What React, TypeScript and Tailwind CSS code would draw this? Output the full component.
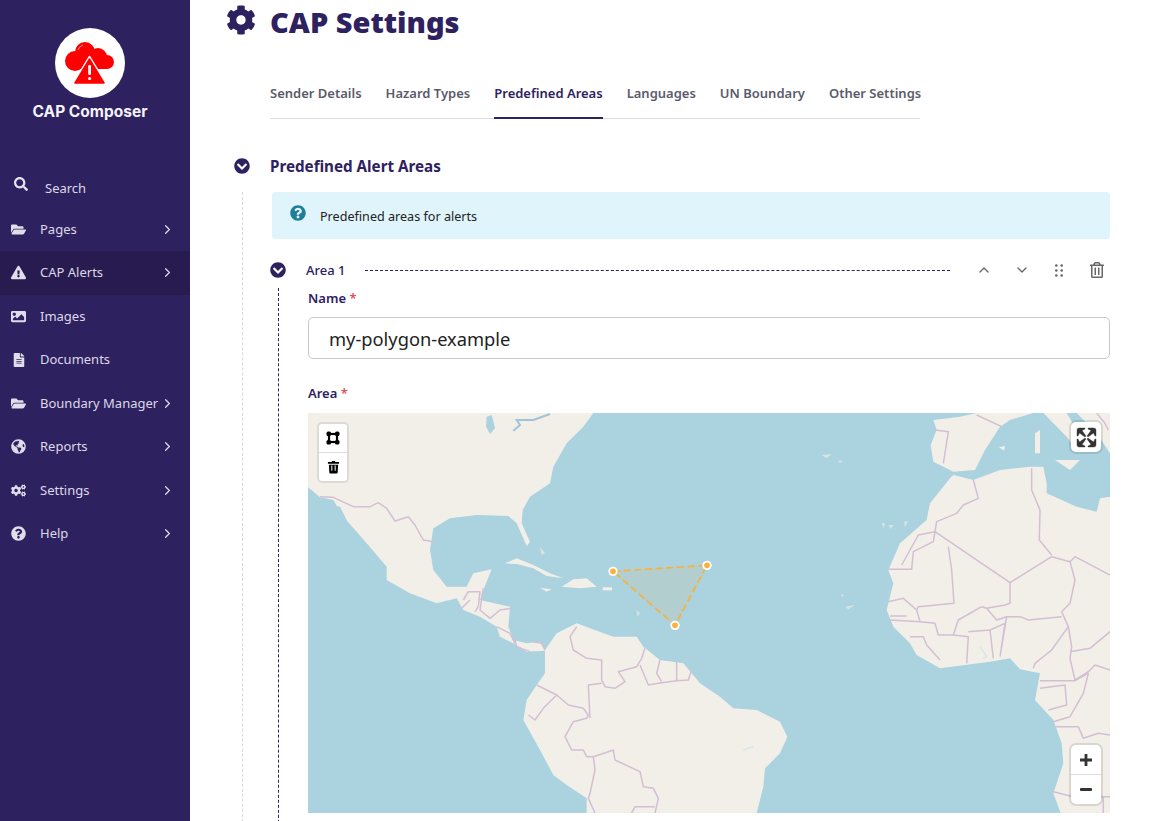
import type { ReactNode } from "react"
import {
  FaChevronCircleDown,
  FaCog,
  FaCogs,
  FaExclamationTriangle,
  FaFileAlt,
  FaFolderOpen,
  FaGlobeAmericas,
  FaImage,
  FaQuestionCircle,
  FaRegTrashAlt,
  FaSearch,
} from "react-icons/fa"
import { LuChevronDown, LuChevronRight, LuChevronUp } from "react-icons/lu"

const navItems: { label: string; icon: ReactNode; arrow: boolean; active?: boolean }[] = [
  { label: "Pages", icon: <FaFolderOpen />, arrow: true },
  { label: "CAP Alerts", icon: <FaExclamationTriangle />, arrow: true, active: true },
  { label: "Images", icon: <FaImage />, arrow: false },
  { label: "Documents", icon: <FaFileAlt className="text-[14px] ml-px" />, arrow: false },
  { label: "Boundary Manager", icon: <FaFolderOpen />, arrow: true },
  { label: "Reports", icon: <FaGlobeAmericas />, arrow: true },
  { label: "Settings", icon: <FaCogs />, arrow: true },
  { label: "Help", icon: <FaQuestionCircle />, arrow: true },
]

const tabs = ["Sender Details", "Hazard Types", "Predefined Areas", "Languages", "UN Boundary", "Other Settings"]

function Logo() {
  return (
    <svg viewBox="0 0 70 70" className="w-[70px] h-[70px]">
      <circle cx="35" cy="35" r="35" fill="#fff" />
      <g fill="#f00">
        <circle cx="20" cy="33" r="10" />
        <circle cx="30" cy="24" r="10" />
        <circle cx="43" cy="29" r="9" />
        <circle cx="52" cy="34" r="7" />
        <rect x="20" y="30" width="32" height="11" />
      </g>
      <path d="M23 22 a8 8 0 0 1 5 -5" fill="none" stroke="#fff" strokeOpacity="0.7" strokeWidth="0.8" />
      <path d="M34.5 29 L51 56 L18 56 Z" fill="#f00" stroke="#fff" strokeWidth="2.2" strokeLinejoin="round" />
      <path d="M34.5 31 L49 55 L20 55 Z" fill="#f00" stroke="#f00" strokeWidth="1.5" strokeLinejoin="round" />
      <rect x="33.2" y="37" width="2.8" height="10" rx="1.2" fill="#fff" />
      <circle cx="34.6" cy="50.5" r="1.6" fill="#fff" />
    </svg>
  )
}

function Sidebar() {
  return (
    <aside className="w-[190px] shrink-0 h-full bg-[#2e2160] text-[#dcd9e8] font-['Noto_Sans',sans-serif]">
      <div className="flex flex-col items-center pt-[28px] pr-[10px]">
        <Logo />
        <div className="mt-[4px] font-['Inter',sans-serif] font-bold text-[15.5px] leading-[20px] text-[#f4f3f8] whitespace-nowrap">
          CAP Composer
        </div>
      </div>
      <div className="mt-[45px] h-[40.5px] flex items-center pl-[14px] text-[13px]">
        <FaSearch className="text-[14px] -mt-[7px] text-[#e6e4ef]" />
        <span className="ml-[17px] mt-[2px]">Search</span>
      </div>
      <nav className="flex flex-col">
        {navItems.map((item) => (
          <div
            key={item.label}
            className={`h-[43.5px] flex items-center pl-[10px] text-[13px] ${item.active ? "bg-[#271b4f]" : ""}`}
          >
            <span className="w-[16px] flex justify-center text-[15px] text-[#e0deeb]">{item.icon}</span>
            <span className="ml-[14px] flex-1 whitespace-nowrap">{item.label}</span>
            {item.arrow && <LuChevronRight className="text-[15px] mr-[15px] shrink-0" />}
          </div>
        ))}
      </nav>
    </aside>
  )
}

function Grip() {
  return (
    <svg viewBox="0 0 8 13" className="w-[8px] h-[13px]" fill="#666">
      <circle cx="1.3" cy="1.5" r="1.3" />
      <circle cx="6.7" cy="1.5" r="1.3" />
      <circle cx="1.3" cy="6.5" r="1.3" />
      <circle cx="6.7" cy="6.5" r="1.3" />
      <circle cx="1.3" cy="11.5" r="1.3" />
      <circle cx="6.7" cy="11.5" r="1.3" />
    </svg>
  )
}

function MapBase() {
  return (
    <svg
      viewBox="24 9 2406 1200"
      className="w-full h-full block blur-[0.5px]"
      preserveAspectRatio="none"
    >
      <rect x="24" y="9" width="2406" height="1200" fill="#abd2df" />
      {/* americas */}
      <path
        fill="#f2efe9"
        d="M24 9 L880 9 L850 50 L800 100 L760 170 L750 220 L690 260 L668 300 L665 340 L690 395 L680 408 L650 340 L625 318 L530 315 L450 325 L400 355 L390 420 L400 480 L440 530 L500 530 L520 490 L575 478 L550 540 L540 570 L630 590 L625 650 L640 690 L680 700 L720 695 L735 720 L770 670 L830 640 L870 655 L940 680 L1010 680 L1030 710 L1080 750 L1150 760 L1200 820 L1260 860 L1300 895 L1370 900 L1440 935 L1462 980 L1440 1030 L1395 1075 L1390 1130 L1370 1209 L860 1209 L860 1165 L800 1125 L760 1095 L720 1020 L670 930 L680 870 L710 825 L735 790 L735 722 L680 725 L640 700 L600 680 L590 650 L540 620 L490 600 L470 565 L410 580 L330 550 L260 510 L260 470 L200 400 L130 320 L100 270 L60 262 L24 232 Z"
      />
      <path fill="#abd2df" d="M100 285 L120 290 L150 350 L190 440 L180 448 L150 400 L110 345 Z" />
      <path fill="#abd2df" d="M560 20 L575 15 L585 55 L570 72 L558 50 Z" />
      <path fill="none" stroke="#9fc4d6" strokeWidth="6" d="M640 62 L660 45 L650 30 L700 30 L750 12" />
      <path fill="#f2efe9" d="M615 460 L650 445 L700 465 L750 490 L790 505 L740 498 L700 475 L650 462 Z" />
      <path fill="#f2efe9" d="M720 533 L755 538 L740 545 Z" />
      <path fill="#f2efe9" d="M785 530 L820 508 L860 505 L890 530 L840 535 Z" />
      <path fill="#f2efe9" d="M908 532 L936 532 L936 541 L908 541 Z" />
      <path fill="#d8e4e2" d="M720 410 L735 430 L725 435 Z M1010 600 L1020 610 L1012 620 Z" />
      <g fill="none" stroke="#d3bfd3" strokeWidth="4.5" strokeLinejoin="round">
        <path d="M60 260 L100 262 L160 290 L210 290 L235 278 L260 295 L285 333 L325 320 L345 345 L370 390 L400 395" />
        <path d="M490 570 L505 545 L540 545 L535 590 L525 605 M485 595 L510 570 M550 535 L540 600 L570 625 L600 600 L635 595 M590 650 L630 670 L645 700 M645 690 L650 710 L690 725 M700 695 L725 700 L735 720" />
        <path d="M830 650 L810 680 L820 720 L860 745 L905 750 L905 810 L915 830 L945 835 L975 815 L955 785 L1010 770 L1025 745 L1035 715" />
        <path d="M1020 765 L1045 825 L1075 820 L1130 812 L1165 810 L1175 780 M1080 750 L1070 790 L1085 815 M1130 755 L1130 810" />
        <path d="M905 820 L865 825 L870 925 M710 825 L770 855 L730 895 L705 930 L685 915" />
        <path d="M770 855 L805 885 L850 895 L865 915 L860 925 L820 935 L795 980 L815 1020 L850 1020 L860 1040 L880 1040 L940 1020 L945 1050 L1020 1085 L1030 1130 L1060 1135 L1075 1165 L1065 1209" />
        <path d="M880 1040 L885 1080 L870 1150 L865 1165 L885 1209 M995 1209 L1005 1190 L1065 1190" />
      </g>
      <g transform="translate(1200 0)">
        {/* africa and europe */}
        <path
          fill="#f2efe9"
          d="M760 195 L820 210 L900 180 L990 170 L1030 170 L1040 220 L1040 250 L1130 290 L1190 305 L1200 265 L1230 260 L1230 1209 L1082 1209 L1060 1150 L1090 1060 L1085 1000 L1060 930 L1005 870 L1020 790 L960 778 L930 745 L870 755 L720 775 L650 735 L630 700 L580 650 L560 600 L580 520 L565 480 L600 400 L680 330 L690 280 L750 205 Z"
        />
        <path
          fill="#f2efe9"
          d="M700 30 L780 20 L830 9 L1000 9 L930 30 L900 50 L855 120 L825 180 L760 185 L700 155 L692 105 L710 60 Z"
        />
        <path fill="#f2efe9" d="M1030 9 L1060 40 L1100 80 L1140 130 L1130 90 L1170 110 L1130 60 L1100 9 Z" />
        <path fill="#f2efe9" d="M1130 9 L1190 70 L1230 130 L1230 9 Z" />
        <path fill="#f2efe9" d="M1005 70 L1020 60 L1020 130 L1005 130 Z" />
        <path fill="#f2efe9" d="M1065 150 L1140 150 L1110 180 Z" />
        <path fill="#f2efe9" d="M897 112 L915 108 L912 122 Z" />
        <path
          fill="#d8e4e2"
          d="M365 135 L395 132 L380 145 Z M412 152 L430 152 L420 158 Z M545 340 L555 338 L552 355 Z M565 345 L580 345 L572 357 Z M612 335 L625 332 L615 352 Z M422 552 L432 555 L428 562 Z M435 590 L465 585 L445 598 Z"
        />
        <path fill="none" stroke="#d5e6ea" strokeWidth="4" d="M130 1020 L160 1010 M840 710 L860 740 L850 745" />
        <g fill="none" stroke="#d3bfd3" strokeWidth="4.5" strokeLinejoin="round">
          <path d="M705 60 L745 65 L730 160 M830 15 L905 50 M1190 9 L1215 40 L1225 60" />
          <path d="M995 175 L995 240 L1020 300 L1018 390 L1055 435" />
          <path d="M820 210 L835 265 L790 285 L770 310 L710 335 L705 365 L930 518" />
          <path d="M565 478 L635 478 L640 425 L700 395 L705 365 L655 375 L605 465" />
          <path d="M745 410 L755 480 L762 580 L655 590 L650 600" />
          <path d="M930 518 L930 580 L915 585 L860 595 L845 590" />
          <path d="M930 518 L1055 440 L1110 455 L1125 440 L1230 495" />
          <path d="M1110 455 L1125 510 L1110 580 L1085 605 L1105 650 L1115 710 L1110 745 L1125 810" />
          <path d="M860 595 L890 630 L920 620 L960 620 L985 630 L1085 620" />
          <path d="M565 575 L610 565 L650 600 L660 635 L570 630 M570 618 L620 618 M660 635 L705 640 L715 675 L760 675 L775 630 L845 590" />
          <path d="M760 675 L805 680 L800 760 M805 665 L870 660 L880 745 M870 660 L915 640 L900 740 M920 620 L900 740" />
          <path d="M1105 650 L1055 720 L1005 760 L1000 775 M630 680 L670 680 L680 705 L720 750" />
          <path d="M1110 725 L1170 715 L1230 665 M1125 810 L1165 785 L1185 765 L1230 780" />
          <path d="M1020 812 L1125 812 L1165 790 L1150 850 L1110 920 L1060 935 M1020 835 L1095 825 L1100 885 L1045 900" />
          <path d="M1065 950 L1135 950 L1150 985 L1195 970 L1230 975 M1060 1145 L1120 1160 L1230 1160 M1210 1160 L1210 1209" />
        </g>
      </g>
      {/* drawn polygon */}
      <path
        d="M939 484 L1221 466 L1125 646 Z"
        fill="#fbb03b"
        fillOpacity="0.1"
        stroke="#fbb03b"
        strokeWidth="5"
        strokeDasharray="22 10"
      />
      {[
        [939, 484],
        [1221, 466],
        [1125, 646],
      ].map(([cx, cy]) => (
        <g key={cx}>
          <circle cx={cx} cy={cy} r="14" fill="#fff" />
          <circle cx={cx} cy={cy} r="8.5" fill="#fbb03b" />
        </g>
      ))}
    </svg>
  )
}

function MapControls() {
  return (
    <>
      <div className="absolute left-[9px] top-[9px] w-[32px] rounded-[5px] bg-white border-2 border-[#dcdad5] overflow-hidden">
        <div className="h-[29px] flex items-center justify-center border-b border-[#ddd]">
          <svg viewBox="0 0 14 14" className="w-[14px] h-[14px]">
            <rect x="3" y="3" width="8" height="8" fill="none" stroke="#000" strokeWidth="2.2" />
            <rect x="0.5" y="0.5" width="4.5" height="4.5" rx="1.6" fill="#000" />
            <rect x="9" y="0.5" width="4.5" height="4.5" rx="1.6" fill="#000" />
            <rect x="0.5" y="9" width="4.5" height="4.5" rx="1.6" fill="#000" />
            <rect x="9" y="9" width="4.5" height="4.5" rx="1.6" fill="#000" />
          </svg>
        </div>
        <div className="h-[28px] flex items-center justify-center">
          <svg viewBox="0 0 14 14" className="w-[13px] h-[14px]">
            <path d="M5.5 0.5 h3 l0.6 1 h3.9 v2 h-12 v-2 h3.9 z" fill="#000" />
            <path d="M2 4.6 h10 l-0.5 8.4 a1 1 0 0 1 -1 0.9 h-7 a1 1 0 0 1 -1 -0.9 z" fill="#000" />
            <path d="M5.2 5.5 v5.5 M8.8 5.5 v5.5" stroke="#fff" strokeWidth="1.1" />
          </svg>
        </div>
      </div>
      <div className="absolute right-[9px] top-[9px] w-[30px] h-[30px] rounded-[5px] bg-white flex items-center justify-center shadow-[0_0_0_2px_rgba(0,0,0,0.1)]">
        <svg viewBox="0 0 29 29" className="w-[29px] h-[29px]" fill="#333" stroke="#333" strokeWidth="0.4">
          <path d="M24 16v5.5c0 1.75-.75 2.5-2.5 2.5H16v-1l3-1.5-4-5.5 1-1 5.5 4 1.5-3h1zM6 16l1.5 3 5.5-4 1 1-4 5.5 3 1.5v1H7.5C5.75 24 5 23.25 5 21.5V16h1zm7-11v1l-3 1.5 4 5.5-1 1-5.5-4L6 13H5V7.5C5 5.75 5.75 5 7.5 5H13zm11 2.5c0-1.75-.75-2.5-2.5-2.5H16v1l3 1.5-4 5.5 1 1 5.5-4 1.5 3h1V7.5z" />
        </svg>
      </div>
      <div className="absolute right-[9px] bottom-[9px] w-[30px] rounded-[5px] bg-white overflow-hidden shadow-[0_0_0_2px_rgba(0,0,0,0.1)]">
        <div className="h-[30px] flex items-center justify-center border-b border-[#ddd]">
          <svg viewBox="0 0 12 12" className="w-[12px] h-[12px]" fill="#333">
            <path d="M4.6 0 h2.8 v4.6 H12 v2.8 H7.4 V12 H4.6 V7.4 H0 V4.6 h4.6 z" />
          </svg>
        </div>
        <div className="h-[29px] flex items-center justify-center">
          <div className="w-[12px] h-[3px] bg-[#333] rounded-[1px]" />
        </div>
      </div>
    </>
  )
}

export default function App() {
  return (
    <div className="flex w-[1154px] h-[821px] overflow-hidden bg-white font-['Noto_Sans',sans-serif]">
      <Sidebar />
      <main className="flex-1 min-w-0 text-[#2e2160]">
        <div className="h-[44px] flex items-center pl-[36px]">
          <FaCog className="text-[30px] -mt-[4px]" />
          <h1 className="ml-[14px] text-[29px] leading-[44px] font-black whitespace-nowrap">CAP Settings</h1>
        </div>
        <div className="ml-[80px] mt-[24px] w-[650px] h-[51px] flex gap-[24px] border-b border-[#dddde2] text-[13px] font-semibold text-[#5b5b6b]">
          {tabs.map((tab) => (
            <div
              key={tab}
              className={`h-[51px] pt-[16px] whitespace-nowrap ${
                tab === "Predefined Areas" ? "text-[#2e2160] border-b-2 border-[#2e2160]" : ""
              }`}
            >
              {tab}
            </div>
          ))}
        </div>
        <div className="mt-[36px] h-[22px] flex items-center pl-[44px]">
          <FaChevronCircleDown className="text-[16px]" />
          <h2 className="ml-[20px] text-[15.2px] font-bold">Predefined Alert Areas</h2>
        </div>
        <div className="ml-[52px] mr-[44px] mt-[15px] border-l border-dashed border-[#d8d8d8] pl-[29px] h-[700px]">
          <div className="h-[47px] rounded-[3px] bg-[#e0f4fb] flex items-center pl-[18px] text-[12.6px] text-[#222]">
            <FaQuestionCircle className="text-[16px] text-[#1f7e9a] -mt-[6px]" />
            <span className="ml-[14px] mt-[3px]">Predefined areas for alerts</span>
          </div>
          <div className="mt-[21px] h-[20px] flex items-center -ml-[2px]">
            <FaChevronCircleDown className="text-[16px] shrink-0" />
            <span className="ml-[20px] mt-[1px] text-[13px] font-medium whitespace-nowrap">Area 1</span>
            <div className="ml-[20px] flex-1 border-t border-dashed border-[#2e2160]" />
            <div className="ml-[26px] w-[134px] shrink-0 flex items-center text-[#666]">
              <LuChevronUp className="text-[16px]" />
              <LuChevronDown className="text-[16px] ml-[22px]" />
              <span className="ml-[25px] flex"><Grip /></span>
              <FaRegTrashAlt className="text-[16px] ml-[26px]" />
            </div>
          </div>
          <div className="ml-[6px] mt-[8px] border-l border-dashed border-[#2e2160] pl-[29px] pt-[1px] h-[560px]">
            <label className="block h-[18px] leading-[18px] text-[13px] font-semibold">
              Name <span className="text-[#d9534f]">*</span>
            </label>
            <div className="mt-[10px] h-[42px] rounded-[5px] border border-[#c8c8c8] flex items-center pl-[20px] text-[18.3px] text-[#222]">
              <span className="mt-[1px]">my-polygon-example</span>
            </div>
            <label className="block mt-[25px] h-[18px] leading-[18px] text-[13px] font-semibold">
              Area <span className="text-[#d9534f]">*</span>
            </label>
            <div className="relative mt-[11px] h-[400px] overflow-hidden">
              <MapBase />
              <MapControls />
            </div>
          </div>
        </div>
      </main>
    </div>
  )
}
